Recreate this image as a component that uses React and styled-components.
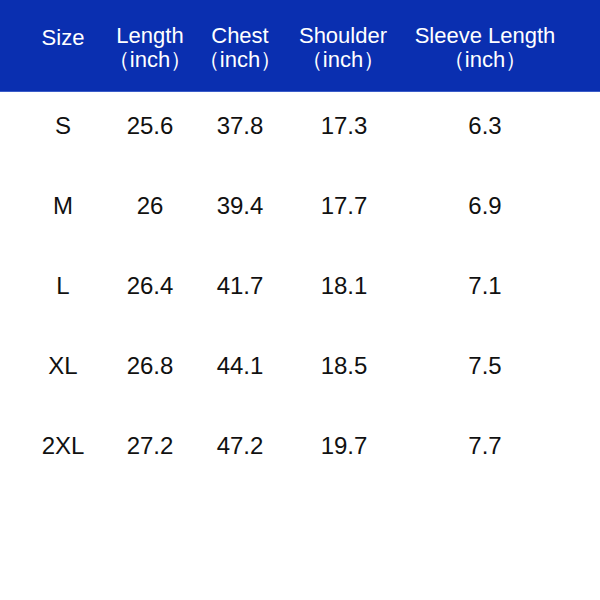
import React from "react";
import styled, { createGlobalStyle } from "styled-components";

const Global = createGlobalStyle`
  html, body {
    margin: 0;
    padding: 0;
    background: #ffffff;
  }
  body {
    font-family: "Liberation Sans", Arial, sans-serif;
  }
`;

const columns = "86px 88px 92px 114px 170px";

const Page = styled.div`
  width: 600px;
  height: 600px;
  background: #ffffff;
  overflow: hidden;
`;

const Header = styled.div`
  height: 92px;
  background: #0a2fb0;
  border-bottom: 1px solid #3a5cc8;
  display: grid;
  grid-template-columns: ${columns};
  padding-left: 20px;
  align-items: start;
  padding-top: 24px;
  box-sizing: border-box;
`;

const HeadCell = styled.div`
  color: #ffffff;
  font-size: 22px;
  line-height: 24px;
  text-align: center;
  white-space: nowrap;
  padding-top: ${props => (props.single ? "2px" : "0")};
`;

const Body = styled.div`
  display: flex;
  flex-direction: column;
`;

const Row = styled.div`
  height: 80px;
  display: grid;
  grid-template-columns: ${columns};
  padding-left: 20px;
  padding-top: 22px;
  box-sizing: border-box;
`;

const Cell = styled.div`
  color: #111111;
  font-size: 24px;
  line-height: 24px;
  text-align: center;
  transform: translateX(${props => props.shift || 0}px);
`;

const heads = [
  { title: "Size", single: true },
  { title: "Length" },
  { title: "Chest" },
  { title: "Shoulder" },
  { title: "Sleeve Length" },
];

const rows = [
  ["S", "25.6", "37.8", "17.3", "6.3"],
  ["M", "26", "39.4", "17.7", "6.9"],
  ["L", "26.4", "41.7", "18.1", "7.1"],
  ["XL", "26.8", "44.1", "18.5", "7.5"],
  ["2XL", "27.2", "47.2", "19.7", "7.7"],
];

export default function App() {
  return (
    <Page>
      <Global />
      <Header>
        {heads.map(h => (
          <HeadCell key={h.title} single={h.single}>
            {h.title}
            {!h.single && (
              <>
                <br />
                （inch）
              </>
            )}
          </HeadCell>
        ))}
      </Header>
      <Body>
        {rows.map(r => (
          <Row key={r[0]}>
            {r.map((v, i) => (
              <Cell key={i} shift={i === 3 ? 1 : 0}>
                {v}
              </Cell>
            ))}
          </Row>
        ))}
      </Body>
    </Page>
  );
}
